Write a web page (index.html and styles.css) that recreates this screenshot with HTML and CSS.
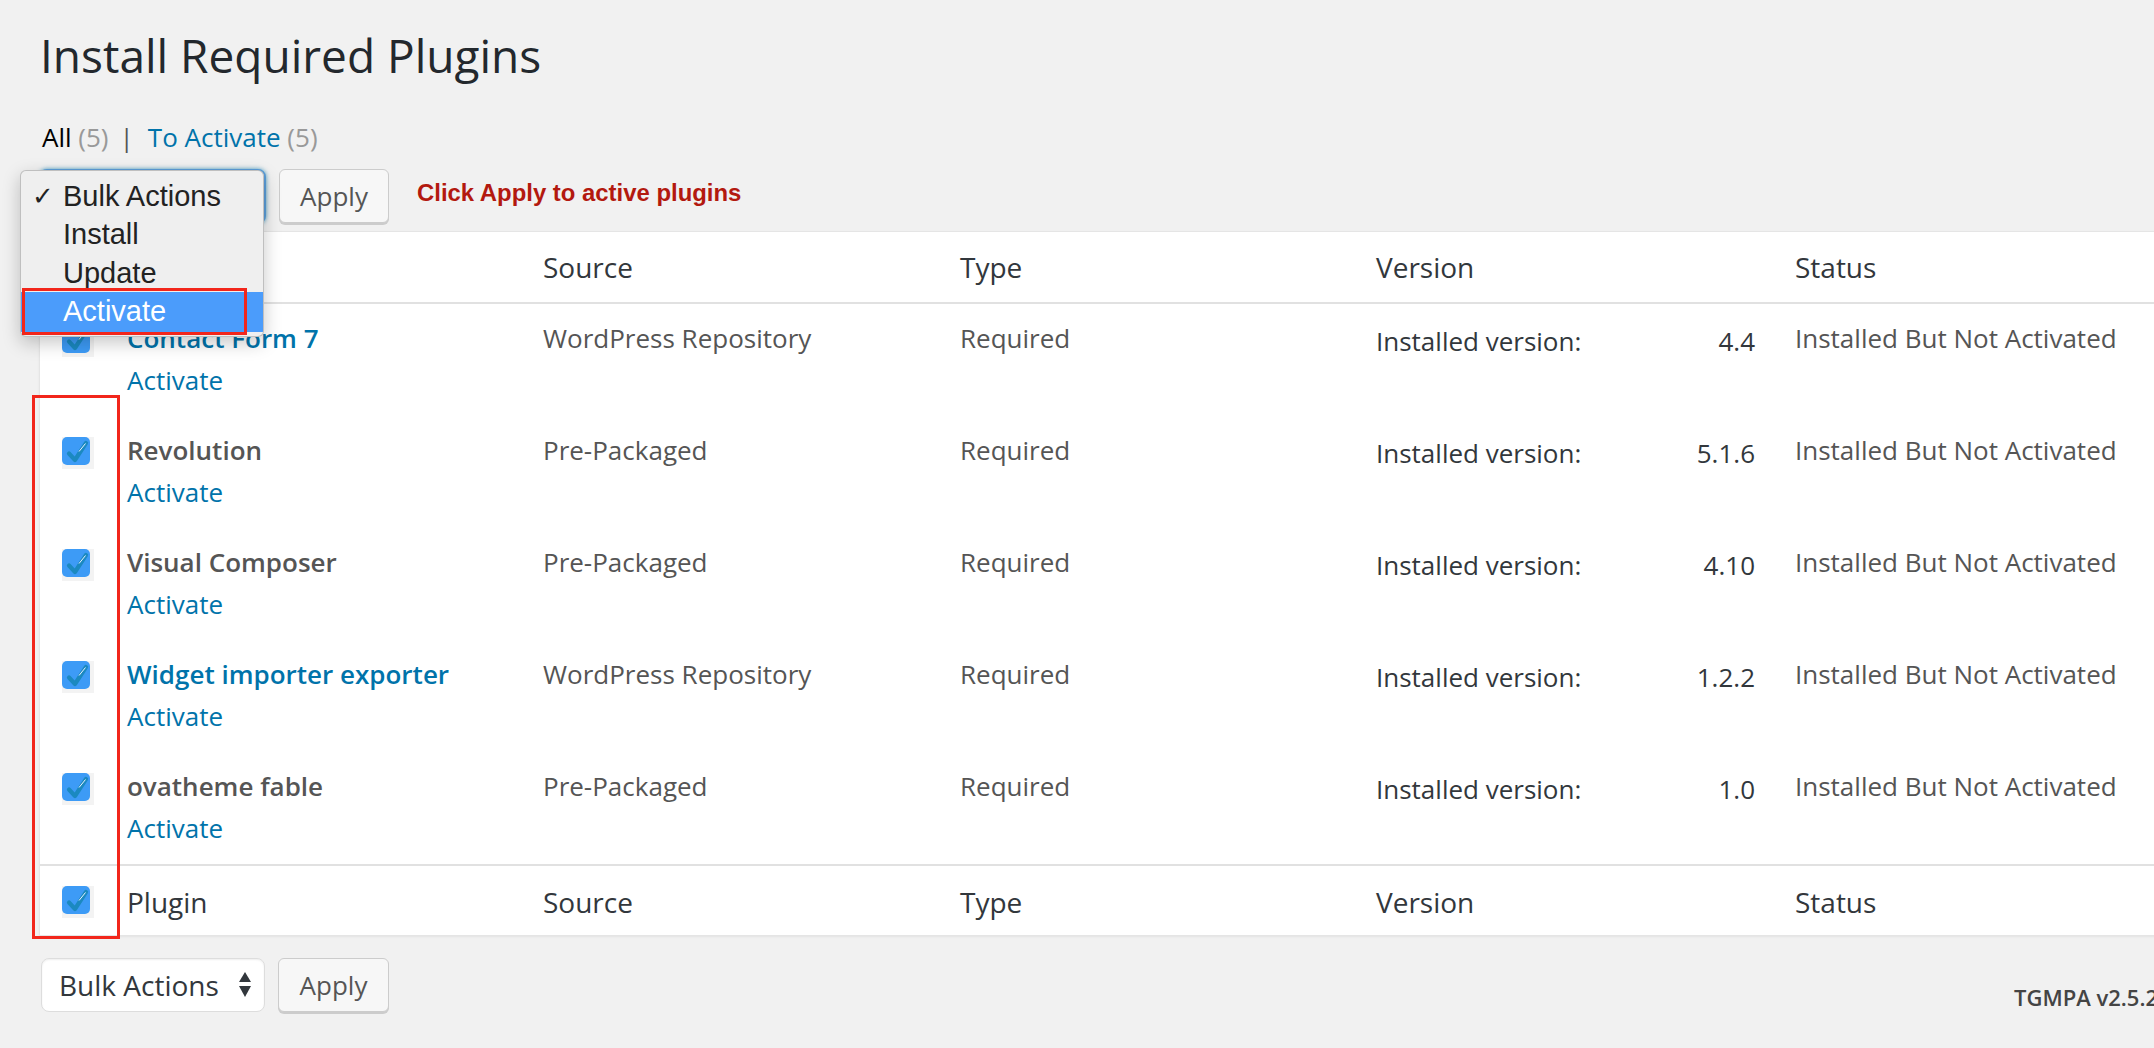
FILE: index.html
```html
<!DOCTYPE html>
<html>
<head>
<meta charset="utf-8">
<title>Install Required Plugins</title>
<link rel="stylesheet" href="styles.css">
</head>
<body>
<div class="wrap">
  <h1>Install Required Plugins</h1>
  <ul class="subsubsub">
    <li class="current">All <span class="count">(5)</span></li>
    <li class="sep">|</li>
    <li><a class="link">To Activate</a> <span class="count">(5)</span></li>
  </ul>

  <div class="tablenav tablenav-top">
    <div class="select select-focus"><span>Bulk Actions</span></div>
    <div class="button">Apply</div>
    <span class="hint">Click Apply to active plugins</span>
  </div>

  <table class="plugins">
    <colgroup>
      <col class="c-cb"><col class="c-name"><col class="c-source"><col class="c-type"><col class="c-version"><col class="c-status">
    </colgroup>
    <thead>
      <tr>
        <th class="cb"><svg class="chk" width="32" height="32" viewBox="0 0 32 32"><rect x="0" y="0" width="32" height="32" fill="#f3f3f3"/><rect x="0" y="0" width="28" height="28" rx="5" fill="#3d9bf6"/><path d="M7 16.5 L13 23 L24 6" fill="none" stroke="#1b89c0" stroke-width="4.2" stroke-linecap="round" stroke-linejoin="round"/><path d="M17 14.5 L23.5 6.5" stroke="#e9f4ff" stroke-width="1"/></svg></th>
        <th>Plugin</th><th>Source</th><th>Type</th><th>Version</th><th>Status</th>
      </tr>
    </thead>
    <tbody>
      <tr>
        <td class="cb"><svg class="chk" width="32" height="32" viewBox="0 0 32 32"><rect x="0" y="0" width="32" height="32" fill="#f3f3f3"/><rect x="0" y="0" width="28" height="28" rx="5" fill="#3d9bf6"/><path d="M7 16.5 L13 23 L24 6" fill="none" stroke="#1b89c0" stroke-width="4.2" stroke-linecap="round" stroke-linejoin="round"/><path d="M17 14.5 L23.5 6.5" stroke="#e9f4ff" stroke-width="1"/></svg></td>
        <td class="name"><div class="pname is-link">Contact Form 7</div><div class="actions">Activate</div></td>
        <td>WordPress Repository</td>
        <td>Required</td>
        <td class="version"><div class="vrow"><span>Installed version:</span><span>4.4</span></div></td>
        <td>Installed But Not Activated</td>
      </tr>
      <tr>
        <td class="cb"><svg class="chk" width="32" height="32" viewBox="0 0 32 32"><rect x="0" y="0" width="32" height="32" fill="#f3f3f3"/><rect x="0" y="0" width="28" height="28" rx="5" fill="#3d9bf6"/><path d="M7 16.5 L13 23 L24 6" fill="none" stroke="#1b89c0" stroke-width="4.2" stroke-linecap="round" stroke-linejoin="round"/><path d="M17 14.5 L23.5 6.5" stroke="#e9f4ff" stroke-width="1"/></svg></td>
        <td class="name"><div class="pname">Revolution</div><div class="actions">Activate</div></td>
        <td>Pre-Packaged</td>
        <td>Required</td>
        <td class="version"><div class="vrow"><span>Installed version:</span><span>5.1.6</span></div></td>
        <td>Installed But Not Activated</td>
      </tr>
      <tr>
        <td class="cb"><svg class="chk" width="32" height="32" viewBox="0 0 32 32"><rect x="0" y="0" width="32" height="32" fill="#f3f3f3"/><rect x="0" y="0" width="28" height="28" rx="5" fill="#3d9bf6"/><path d="M7 16.5 L13 23 L24 6" fill="none" stroke="#1b89c0" stroke-width="4.2" stroke-linecap="round" stroke-linejoin="round"/><path d="M17 14.5 L23.5 6.5" stroke="#e9f4ff" stroke-width="1"/></svg></td>
        <td class="name"><div class="pname">Visual Composer</div><div class="actions">Activate</div></td>
        <td>Pre-Packaged</td>
        <td>Required</td>
        <td class="version"><div class="vrow"><span>Installed version:</span><span>4.10</span></div></td>
        <td>Installed But Not Activated</td>
      </tr>
      <tr>
        <td class="cb"><svg class="chk" width="32" height="32" viewBox="0 0 32 32"><rect x="0" y="0" width="32" height="32" fill="#f3f3f3"/><rect x="0" y="0" width="28" height="28" rx="5" fill="#3d9bf6"/><path d="M7 16.5 L13 23 L24 6" fill="none" stroke="#1b89c0" stroke-width="4.2" stroke-linecap="round" stroke-linejoin="round"/><path d="M17 14.5 L23.5 6.5" stroke="#e9f4ff" stroke-width="1"/></svg></td>
        <td class="name"><div class="pname is-link">Widget importer exporter</div><div class="actions">Activate</div></td>
        <td>WordPress Repository</td>
        <td>Required</td>
        <td class="version"><div class="vrow"><span>Installed version:</span><span>1.2.2</span></div></td>
        <td>Installed But Not Activated</td>
      </tr>
      <tr>
        <td class="cb"><svg class="chk" width="32" height="32" viewBox="0 0 32 32"><rect x="0" y="0" width="32" height="32" fill="#f3f3f3"/><rect x="0" y="0" width="28" height="28" rx="5" fill="#3d9bf6"/><path d="M7 16.5 L13 23 L24 6" fill="none" stroke="#1b89c0" stroke-width="4.2" stroke-linecap="round" stroke-linejoin="round"/><path d="M17 14.5 L23.5 6.5" stroke="#e9f4ff" stroke-width="1"/></svg></td>
        <td class="name"><div class="pname">ovatheme fable</div><div class="actions">Activate</div></td>
        <td>Pre-Packaged</td>
        <td>Required</td>
        <td class="version"><div class="vrow"><span>Installed version:</span><span>1.0</span></div></td>
        <td>Installed But Not Activated</td>
      </tr>
    </tbody>
    <tfoot>
      <tr>
        <th class="cb"><svg class="chk" width="32" height="32" viewBox="0 0 32 32"><rect x="0" y="0" width="32" height="32" fill="#f3f3f3"/><rect x="0" y="0" width="28" height="28" rx="5" fill="#3d9bf6"/><path d="M7 16.5 L13 23 L24 6" fill="none" stroke="#1b89c0" stroke-width="4.2" stroke-linecap="round" stroke-linejoin="round"/><path d="M17 14.5 L23.5 6.5" stroke="#e9f4ff" stroke-width="1"/></svg></th>
        <th>Plugin</th><th>Source</th><th>Type</th><th>Version</th><th>Status</th>
      </tr>
    </tfoot>
  </table>

  <div class="tablenav tablenav-bottom">
    <div class="select"><span>Bulk Actions</span>
      <svg class="arrows" width="12" height="26" viewBox="0 0 12 26"><path d="M0 10 L6 0 L12 10 Z" fill="#32373c"/><path d="M0 14 L6 25 L12 14 Z" fill="#32373c"/></svg>
    </div>
    <div class="button">Apply</div>
    <span class="tgmpa">TGMPA v2.5.2</span>
  </div>
</div>

<div class="menu">
  <div class="menu-item checked"><span class="mark">✓</span>Bulk Actions</div>
  <div class="menu-item">Install</div>
  <div class="menu-item">Update</div>
  <div class="menu-item selected">Activate</div>
</div>
<div class="annot annot-activate"></div>
<div class="annot annot-col"></div>
</body>
</html>
```

FILE: styles.css
```css
html, body {
  margin: 0;
  padding: 0;
  overflow: hidden;
}
body {
  width: 2154px;
  height: 1048px;
  position: relative;
  background: #f1f1f1;
  font-family: "Open Sans", "Liberation Sans", sans-serif;
  color: #444;
}
.wrap {
  padding-left: 39px;
  width: 2153px;
}
h1 {
  margin: 23px 0 0 1px;
  font-size: 46px;
  font-weight: 400;
  line-height: 64px;
  color: #23282d;
}
.subsubsub {
  list-style: none;
  margin: 30px 0 0 3px;
  padding: 0;
  display: flex;
  font-size: 26px;
  line-height: 40px;
  color: #666;
}
.subsubsub .current {
  color: #000;
}
.count {
  color: #999;
}
.sep {
  margin: 0 14px 0 11px;
  color: #555;
}
.link {
  color: #0073aa;
}
.tablenav {
  display: flex;
  align-items: flex-start;
}
.tablenav-top {
  margin-top: 12px;
  height: 55px;
}
.select {
  box-sizing: border-box;
  background: #fff;
  border: 1px solid #ddd;
  border-radius: 8px;
  display: flex;
  align-items: center;
  justify-content: space-between;
  font-size: 28px;
  color: #32373c;
  box-shadow: inset 0 1px 2px rgba(0,0,0,0.07);
}
.select-focus {
  width: 227px;
  height: 55px;
  border: 2px solid #5b9dd9;
  box-shadow: 0 0 4px rgba(30,140,190,0.8);
  padding-left: 17px;
}
.button {
  box-sizing: border-box;
  margin-left: 13px;
  width: 110px;
  height: 54px;
  background: #f7f7f7;
  border: 1px solid #ccc;
  border-radius: 6px;
  box-shadow: 0 2px 0 #ccc;
  font-size: 26px;
  line-height: 52px;
  text-align: center;
  color: #555;
}
.hint {
  margin: 12px 0 0 28px;
  font-family: "Liberation Sans", Arial, sans-serif;
  font-weight: 700;
  font-size: 23.9px;
  line-height: 24px;
  color: #b3190f;
}
table.plugins {
  margin-top: 7px;
  width: 2154px;
  table-layout: fixed;
  border-collapse: separate;
  border-spacing: 0;
  background: #fff;
  border: 1px solid #e5e5e5;
  box-shadow: 0 1px 2px rgba(0,0,0,0.06);
}
col.c-cb { width: 67px; }
col.c-name { width: 416px; }
col.c-source { width: 417px; }
col.c-type { width: 416px; }
col.c-version { width: 419px; }
col.c-status { width: 417px; }
th {
  text-align: left;
  font-weight: 400;
  font-size: 28px;
  line-height: 40px;
  color: #32373c;
  padding: 15px 20px 14px;
  vertical-align: top;
}
thead th {
  border-bottom: 2px solid #e1e1e1;
  padding-bottom: 15px;
}
tfoot th {
  border-top: 2px solid #e1e1e1;
  padding-top: 16px;
  padding-bottom: 13px;
}
th.cb, td.cb {
  padding: 21px 0 0 22px;
}
tfoot th.cb {
  padding-top: 20px;
}
.chk {
  display: block;
}
td {
  vertical-align: top;
  padding: 14px 20px 14px;
  font-size: 26px;
  line-height: 40px;
  color: #555;
  white-space: nowrap;
}
.pname {
  font-weight: 600;
  color: #555;
  height: 40px;
}
.pname.is-link {
  color: #0073aa;
}
.actions {
  line-height: 44px;
  color: #0073aa;
}
td.version {
  padding-top: 17px;
}
.vrow {
  display: flex;
  justify-content: space-between;
  color: #32373c;
}
.tablenav-bottom {
  margin-top: 22px;
}
.tablenav-bottom .select {
  margin-left: 2px;
  width: 224px;
  height: 54px;
  padding: 0 13px 0 17px;
}
.arrows {
  display: block;
}
.tablenav-bottom .button {
  margin-left: 13px;
  width: 111px;
}
.tgmpa {
  margin: 24px 34px 0 auto;
  font-size: 22px;
  font-weight: 600;
  line-height: 30px;
  color: #444;
}
.menu {
  position: absolute;
  left: 20px;
  top: 170px;
  width: 244px;
  height: 167px;
  box-sizing: border-box;
  padding-top: 6px;
  background: #efefef;
  border: 1px solid rgba(0,0,0,0.2);
  border-radius: 6px;
  box-shadow: 0 6px 18px rgba(0,0,0,0.22);
  font-family: "Liberation Sans", Arial, sans-serif;
  font-size: 29px;
  color: #222;
  overflow: hidden;
}
.menu-item {
  position: relative;
  height: 38.3px;
  line-height: 38.3px;
  padding-left: 42px;
}
.menu-item.selected {
  height: 40px;
  line-height: 38px;
  background: #4b9cfb;
  color: #fff;
}
.mark {
  position: absolute;
  left: 11px;
  top: 0;
  font-family: "DejaVu Sans", sans-serif;
  font-size: 26px;
  font-weight: 700;
  color: #222;
}
.annot {
  position: absolute;
  box-sizing: border-box;
  border: 3px solid #f2261b;
}
.annot-activate {
  left: 22px;
  top: 288px;
  width: 225px;
  height: 47px;
}
.annot-col {
  left: 32px;
  top: 395px;
  width: 88px;
  height: 544px;
}
```
